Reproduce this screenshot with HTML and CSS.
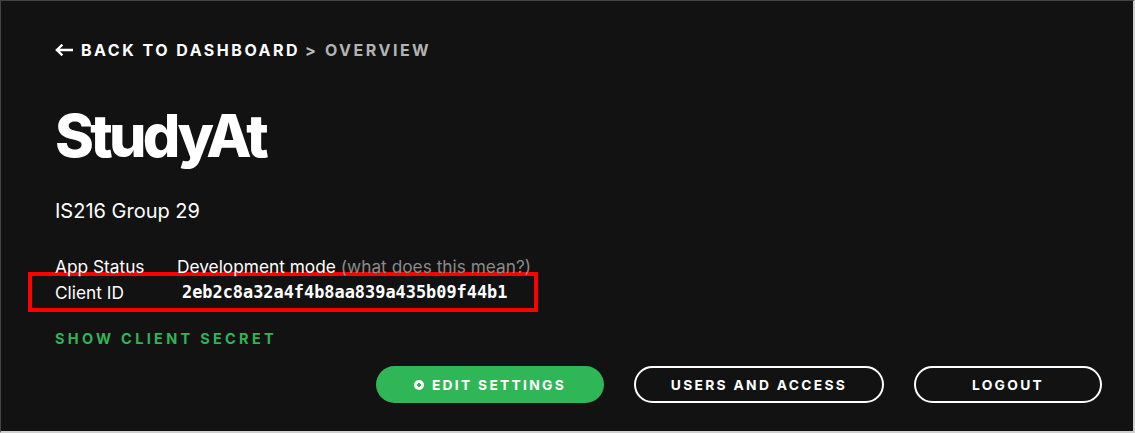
FILE: index.html
```html
<!DOCTYPE html>
<html>
<head>
<meta charset="utf-8">
<link rel="stylesheet" href="styles.css">
</head>
<body>
<div class="frame">
  <div class="page">
    <nav class="crumbs">
      <svg class="arrow" width="18" height="12" viewBox="0 0 18 12"><path d="M17 6H2M6.5 1.5L2 6l4.5 4.5" fill="none" stroke="#fff" stroke-width="2.4" stroke-linecap="square"/></svg>
      <span class="back">BACK TO DASHBOARD</span>
      <span class="sep">&gt;</span>
      <span class="current">OVERVIEW</span>
    </nav>
    <h1 class="title">StudyAt</h1>
    <p class="desc">IS216 Group 29</p>
    <div class="info">
      <div class="row">
        <span class="label">App Status</span>
        <span class="value">Development mode <span class="muted">(what does this mean?)</span></span>
      </div>
      <div class="row highlight">
        <span class="label">Client ID</span>
        <span class="value mono">2eb2c8a32a4f4b8aa839a435b09f44b1</span>
      </div>
    </div>
    <div class="secret">SHOW CLIENT SECRET</div>
    <div class="actions">
      <button class="btn primary"><span class="dot"></span>EDIT SETTINGS</button>
      <button class="btn outline users">USERS AND ACCESS</button>
      <button class="btn outline logout">LOGOUT</button>
    </div>
  </div>
</div>
</body>
</html>
```
FILE: styles.css
```css
* { box-sizing: border-box; }
html, body { margin: 0; padding: 0; background: #121212; }
body { width: 1135px; height: 433px; overflow: hidden; font-family: "Inter", "Liberation Sans", sans-serif; color: #fff; }
.frame {
  width: 1135px; height: 433px;
  border-top: 1px solid #444;
  border-left: 1px solid #444;
  border-right: 2px solid #cfcfcf;
  border-bottom: 2px solid #cfcfcf;
  background: #121212;
}
.page { padding: 40px 31px 0 54px; }
.crumbs {
  font-size: 16px; font-weight: 700; letter-spacing: 2.5px;
  display: flex; align-items: center; height: 17px;
}
.arrow { margin-right: 8px; margin-top: 1px; }
.back { color: #fff; }
.sep { color: #bbb; letter-spacing: 0; margin: 0 9px 0 5px; }
.current { color: #b3b3b3; }
.title {
  margin: 49px 0 0 0; font-size: 59px; font-weight: 800; letter-spacing: -3.7px; line-height: 58px;
}
.desc { margin: 34px 0 0 0; font-size: 20px; line-height: 24px; color: #fff; font-weight: 400; }
.info { margin-top: 32px; font-size: 17.3px; }
.row { display: flex; align-items: center; height: 22px; }
.label { width: 122px; }
.muted { color: #8a8a8a; }
.row.highlight {
  margin-left: -27px; width: 510px; height: 40px;
  border: 4px solid #ff0000; padding-left: 23px; margin-top: -5px;
}
.mono { font-family: "DejaVu Sans Mono", monospace; font-weight: 700; font-size: 16.9px; margin-left: 5px; }
.secret {
  margin-top: 18px; color: #2fb457; font-size: 14.5px; font-weight: 700; letter-spacing: 3.3px;
}
.actions { display: flex; justify-content: flex-end; gap: 30px; margin-top: 19px; }
.btn {
  height: 37px; border-radius: 19px; font-family: inherit; font-size: 13.8px; font-weight: 700;
  letter-spacing: 2.3px; color: #fff; display: flex; align-items: center; justify-content: center; padding: 0;
}
.primary { width: 228px; background: #2fb757; border: none; gap: 8px; }
.dot { width: 10px; height: 10px; border-radius: 50%; background: radial-gradient(circle, #2fb757 0 1.6px, #fff 2px); }
.outline { background: transparent; border: 2px solid #fff; }
.users { width: 250px; }
.logout { width: 188px; }
```
